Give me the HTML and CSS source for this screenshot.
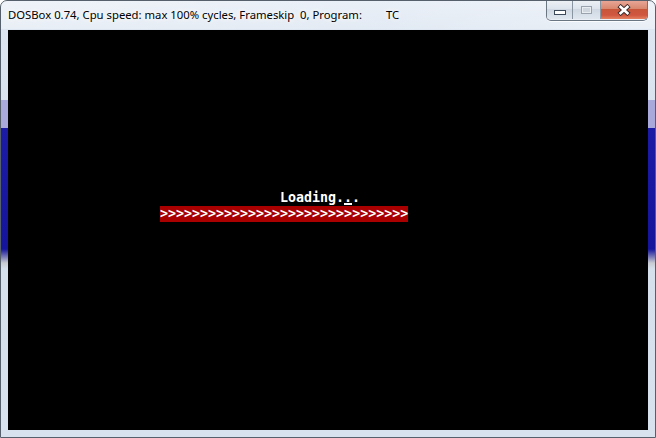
FILE: index.html
```html
<!DOCTYPE html>
<html>
<head>
<meta charset="utf-8">
<title>DOSBox</title>
<link rel="stylesheet" href="styles.css">
</head>
<body>
<div class="window">
  <div class="titlebar">
    <div class="title">DOSBox 0.74, Cpu speed: max 100% cycles, Frameskip  0, Program:<span class="prog">TC</span></div>
    <div class="caption">
      <div class="btn min"><span class="min-icon"></span></div>
      <div class="btn max"><span class="max-icon"></span></div>
      <div class="btn close"><svg width="16" height="12" viewBox="0 0 16 12"><path d="M3 1.5 L13 10.5 M13 1.5 L3 10.5" stroke="#3b2a2a" stroke-width="4.6" stroke-linecap="butt"/><path d="M3.6 2 L12.4 10 M12.4 2 L3.6 10" stroke="#ffffff" stroke-width="2.6"/></svg></div>
    </div>
  </div>
  <div class="client">
    <div class="screen">
      <div class="line loading">Loading.<span class="cursor">.</span>.</div>
      <div class="line barline"><span class="bar">&gt;&gt;&gt;&gt;&gt;&gt;&gt;&gt;&gt;&gt;&gt;&gt;&gt;&gt;&gt;&gt;&gt;&gt;&gt;&gt;&gt;&gt;&gt;&gt;&gt;&gt;&gt;&gt;&gt;&gt;&gt;</span></div>
    </div>
  </div>
</div>
</body>
</html>
```

FILE: styles.css
```css
html, body {
  margin: 0;
  padding: 0;
  background: #ffffff;
}
.window {
  box-sizing: border-box;
  width: 656px;
  height: 438px;
  border: 1px solid #56606c;
  border-radius: 7px 7px 0 0;
  background:
    linear-gradient(to bottom, transparent 99px, #a9aadb 99px, #a9aadb 127px, #1b1ba6 127px, #14149c 248px, #7b7bb8 256px, #c9ccd2 262px, transparent 268px) left top / 7px 100% no-repeat,
    linear-gradient(to bottom, transparent 99px, #a9aadb 99px, #a9aadb 127px, #1b1ba6 127px, #14149c 248px, #7b7bb8 256px, #c9ccd2 262px, transparent 268px) right top / 7px 100% no-repeat,
    linear-gradient(to bottom, #e6edf6 0px, #dde6f1 30px, #d4dfec 200px, #d8e2ee 438px);
  display: flex;
  flex-direction: column;
  overflow: hidden;
}
.titlebar {
  height: 28px;
  display: flex;
  align-items: flex-start;
  background: linear-gradient(to right, rgba(255,255,255,0.35), rgba(255,255,255,0.15) 60%, rgba(255,255,255,0.35));
}
.title {
  font-family: "Noto Sans", "DejaVu Sans", sans-serif;
  font-size: 11.3px;
  color: #000000;
  white-space: pre;
  padding: 6px 0 0 7px;
  line-height: 16px;
  text-shadow: 0 0 6px #ffffff, 0 0 6px #ffffff;
  flex: 1;
}
.prog {
  margin-left: 24px;
}
.caption {
  display: flex;
  margin-right: 7px;
  margin-top: -1px;
  height: 20px;
  border: 1px solid #6b7683;
  border-top: none;
  border-radius: 0 0 5px 5px;
  overflow: hidden;
  box-shadow: 0 1px 0 rgba(255,255,255,0.8);
}
.btn {
  height: 19px;
  display: flex;
  align-items: center;
  justify-content: center;
}
.min, .max {
  background: linear-gradient(to bottom, #eef2f7 0%, #dde4ec 45%, #cfd8e3 50%, #dfe6ee 100%);
  border-right: 1px solid #8a95a2;
}
.min { width: 25px; }
.max { width: 27px; }
.close {
  width: 46px;
  background: linear-gradient(to bottom, #e9a99a 0%, #d98870 45%, #c8553a 50%, #d0573f 80%, #e4805f 100%);
}
.min-icon {
  display: block;
  width: 10px;
  height: 3px;
  margin-top: 6px;
  background: #ffffff;
  border: 1px solid #3c4a5c;
}
.max-icon {
  display: block;
  width: 9px;
  height: 6px;
  border: 1px solid #9aa3ad;
  box-shadow: inset 0 0 0 1px #e8edf2;
  background: #cfd6de;
}
.client {
  margin: 1px 7px 0 7px;
  width: 640px;
  height: 400px;
  background: #000000;
}
.screen {
  padding-top: 160px;
  font-family: "DejaVu Sans Mono", "Liberation Mono", monospace;
  font-weight: bold;
  font-size: 13.3px;
  line-height: 16px;
  color: #ffffff;
}
.line {
  height: 16px;
  white-space: pre;
}
.loading {
  padding-left: 272px;
}
.cursor {
  display: inline-block;
  width: 8px;
  height: 16px;
  vertical-align: top;
  background: linear-gradient(to bottom, transparent 13px, #ffffff 13px, #ffffff 15px, transparent 15px);
}
.barline {
  padding-left: 152px;
}
.bar {
  display: inline-block;
  width: 248px;
  height: 16px;
  background: #aa0000;
  vertical-align: top;
}
```
